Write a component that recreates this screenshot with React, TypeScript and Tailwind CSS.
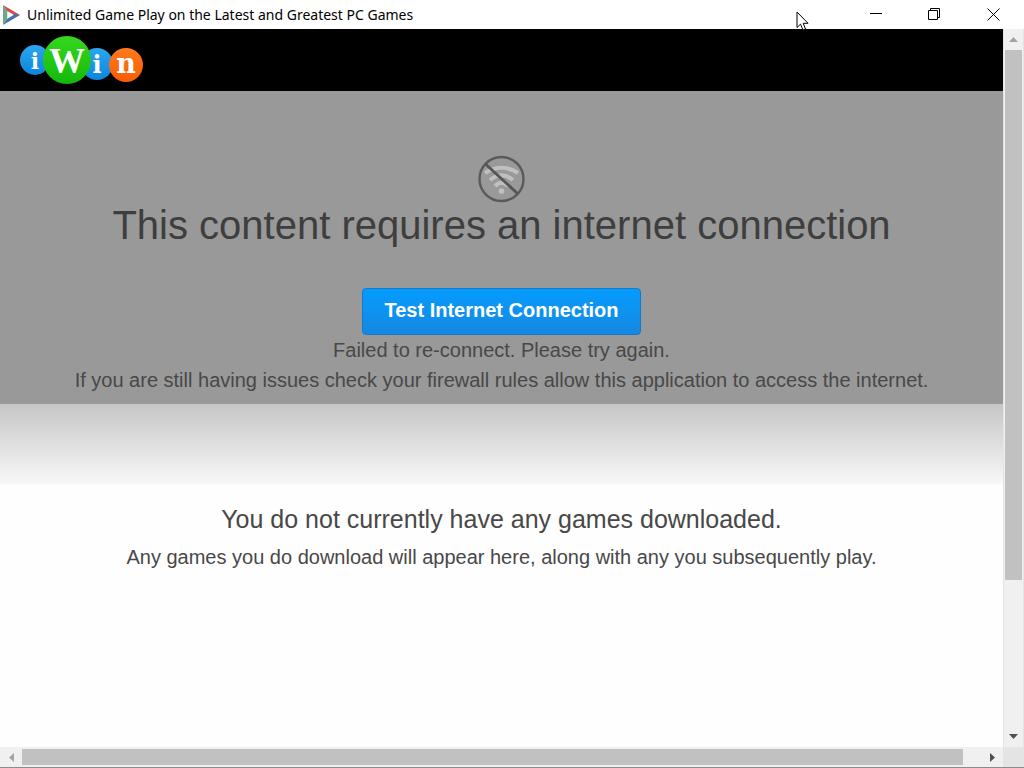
import { useState } from "react";

const logoLetters = [
  { char: "i", cx: 15, cy: 25, r: 15, size: 22, y: 34, fill: "url(#logoBlue)", slab: true },
  { char: "i", cx: 77, cy: 29, r: 16, size: 24, y: 38, fill: "url(#logoBlue)", slab: true },
  { char: "W", cx: 47, cy: 25, r: 24, size: 36, y: 38, fill: "url(#logoGreen)", slab: false },
  { char: "n", cx: 106, cy: 30, r: 17, size: 27, y: 38, fill: "url(#logoOrange)", slab: true },
];

function PlayIcon() {
  return (
    <svg width="19" height="20" viewBox="0 0 19 20" aria-hidden="true">
      <path d="M1 0 L18 10 H12 L5 6 Z" fill="#d84a50" />
      <path d="M18 10 L1 20 L5 14 L12 9 Z" fill="#4472ae" />
      <path d="M1 0 L5.500 6 V14 L1 20 Z" fill="#69a98a" />
      <path d="M5.500 6.500 L11.500 10 L5.500 13.500 Z" fill="#fff" />
    </svg>
  );
}

function Logo() {
  return (
    <svg width="124" height="50" viewBox="0 0 124 50" role="img" aria-label="iWin">
      <defs>
        <linearGradient id="logoBlue" x1="0" y1="0" x2="0" y2="1">
          <stop offset="0" stopColor="#2ba6ef" />
          <stop offset="1" stopColor="#0c86dd" />
        </linearGradient>
        <linearGradient id="logoGreen" x1="0" y1="0" x2="0" y2="1">
          <stop offset="0" stopColor="#35d81c" />
          <stop offset="1" stopColor="#14b80b" />
        </linearGradient>
        <linearGradient id="logoOrange" x1="0" y1="0" x2="0" y2="1">
          <stop offset="0" stopColor="#ff7a1c" />
          <stop offset="1" stopColor="#f95c05" />
        </linearGradient>
      </defs>
      {logoLetters.map((l) => (
        <g key={l.cx}>
          <circle cx={l.cx} cy={l.cy} r={l.r} fill={l.fill} />
          <text
            x={l.cx}
            y={l.y}
            fontSize={l.size}
            textAnchor="middle"
            fill="#fff"
            className={
              l.slab
                ? "font-['DejaVu_Serif',serif] font-bold"
                : "font-['Liberation_Serif',serif] font-bold"
            }
          >
            {l.char}
          </text>
        </g>
      ))}
    </svg>
  );
}

function NoWifiIcon() {
  return (
    <svg width="48" height="48" viewBox="0 0 48 48" fill="none" aria-hidden="true">
      <g stroke="#c0c0c0" strokeWidth="4">
        <path d="M7 18 Q23.500 7.500 40 18" />
        <path d="M12 25 Q23.500 15.500 35 25" />
        <path d="M17 31 Q23.500 24.500 30 31" />
      </g>
      <circle cx="23.500" cy="36" r="2.800" fill="#c0c0c0" />
      <circle cx="23.500" cy="24" r="22" stroke="#5a5a5a" strokeWidth="2.400" />
      <path d="M7.500 9 L39.500 38.500" stroke="#555" strokeWidth="2.800" />
    </svg>
  );
}

function CursorIcon() {
  return (
    <svg width="13" height="21" viewBox="0 0 13 21" aria-hidden="true">
      <path
        d="M1 1 V16.500 L4.500 13.200 L7 19 L9.500 18 L7.200 12.300 H12 Z"
        fill="#fff"
        stroke="#000"
        strokeWidth="1"
      />
    </svg>
  );
}

function TitleBar() {
  return (
    <header className="relative flex h-[29px] shrink-0 items-center bg-white pl-[2px]">
      <PlayIcon />
      <h1 className="ml-[6px] flex-1 truncate font-['Noto_Sans',sans-serif] text-[14px] leading-5 text-black">
        Unlimited Game Play on the Latest and Greatest PC Games
      </h1>
      <div className="flex h-full pb-px">
        <button aria-label="Minimize" className="flex w-[58px] items-center justify-center">
          <svg width="12" height="12" stroke="#000" fill="none">
            <path d="M0 5.500 H12" />
          </svg>
        </button>
        <button aria-label="Restore" className="flex w-[58px] items-center justify-center">
          <svg width="12" height="12" stroke="#000" fill="none">
            <path d="M0.500 2.500 H9.500 V11.500 H0.500 Z M2.500 2.500 V0.500 H11.500 V9.500 H9.500" />
          </svg>
        </button>
        <button aria-label="Close" className="flex w-[61px] items-center justify-center">
          <svg width="13" height="13" stroke="#000" fill="none">
            <path d="M0.500 0.500 L12.500 12.500 M12.500 0.500 L0.500 12.500" />
          </svg>
        </button>
      </div>
      <div className="pointer-events-none absolute top-[11px] right-[215px]">
        <CursorIcon />
      </div>
    </header>
  );
}

function VerticalScrollbar() {
  return (
    <div className="flex w-[21px] shrink-0 flex-col border-x border-[#e4e4e4] bg-[#f0f0f0]">
      <button aria-label="Scroll up" className="flex h-[21px] items-center justify-center">
        <svg width="9" height="5"><path d="M0 5 L4.500 0 L9 5 Z" fill="#a3a3a3" /></svg>
      </button>
      <div className="flex-1 px-px">
        <div className="h-[78.5%] bg-[#c1c1c1]" />
      </div>
      <button aria-label="Scroll down" className="flex h-[22px] items-center justify-center">
        <svg width="9" height="5"><path d="M0 0 L4.500 5 L9 0 Z" fill="#505050" /></svg>
      </button>
    </div>
  );
}

function HorizontalScrollbar() {
  return (
    <div className="flex h-[21px] shrink-0 border-b border-[#8c8c8c] bg-[#f0f0f0]">
      <button aria-label="Scroll left" className="flex w-[22px] items-center justify-center">
        <svg width="5" height="9"><path d="M5 0 L0 4.500 L5 9 Z" fill="#a3a3a3" /></svg>
      </button>
      <div className="flex-1 py-[2px]">
        <div className="h-full w-[98%] bg-[#c1c1c1]" />
      </div>
      <button aria-label="Scroll right" className="flex w-[21px] items-center justify-center">
        <svg width="5" height="9"><path d="M0 0 L5 4.500 L0 9 Z" fill="#505050" /></svg>
      </button>
      <div className="w-[21px] bg-[#e4e4e4]" />
    </div>
  );
}

export default function App() {
  const [failed, setFailed] = useState(true);

  function testConnection() {
    setFailed(!navigator.onLine);
  }

  return (
    <div className="flex h-screen flex-col bg-white font-['Liberation_Sans',sans-serif] text-[#484848]">
      <TitleBar />
      <div className="flex min-h-0 flex-1">
        <main className="min-w-0 flex-1 overflow-hidden bg-[#fefefe] text-center">
          <div className="flex h-[62px] items-center bg-black pl-5">
            <Logo />
          </div>

          <section className="flex min-h-[313px] flex-col items-center bg-[#999] pt-16">
            <NoWifiIcon />
            <h2 className="text-[40px] leading-[44px] text-[#3e3e3e]">
              This content requires an internet connection
            </h2>
            <button
              onClick={testConnection}
              className="mt-[41px] h-[47px] rounded-[4px] border border-[#1579c4] bg-linear-to-b from-[#049cfd] to-[#1488e2] px-[21px] pb-[3px] text-[20px] font-bold text-white"
            >
              Test Internet Connection
            </button>
            {failed && <p className="text-[20px] leading-[30px]">Failed to re-connect. Please try again.</p>}
            <p className="text-[20px] leading-[30px]">
              If you are still having issues check your firewall rules allow this application to access the internet.
            </p>
          </section>

          <div className="h-20 bg-linear-to-b from-[#c6c6c6] to-[#f8f8f8]" />

          <section className="pt-5">
            <h3 className="text-[25px] leading-[30px]">You do not currently have any games downloaded.</h3>
            <p className="mt-2 text-[20px] leading-[30px]">
              Any games you do download will appear here, along with any you subsequently play.
            </p>
          </section>
        </main>
        <VerticalScrollbar />
      </div>
      <HorizontalScrollbar />
    </div>
  );
}
